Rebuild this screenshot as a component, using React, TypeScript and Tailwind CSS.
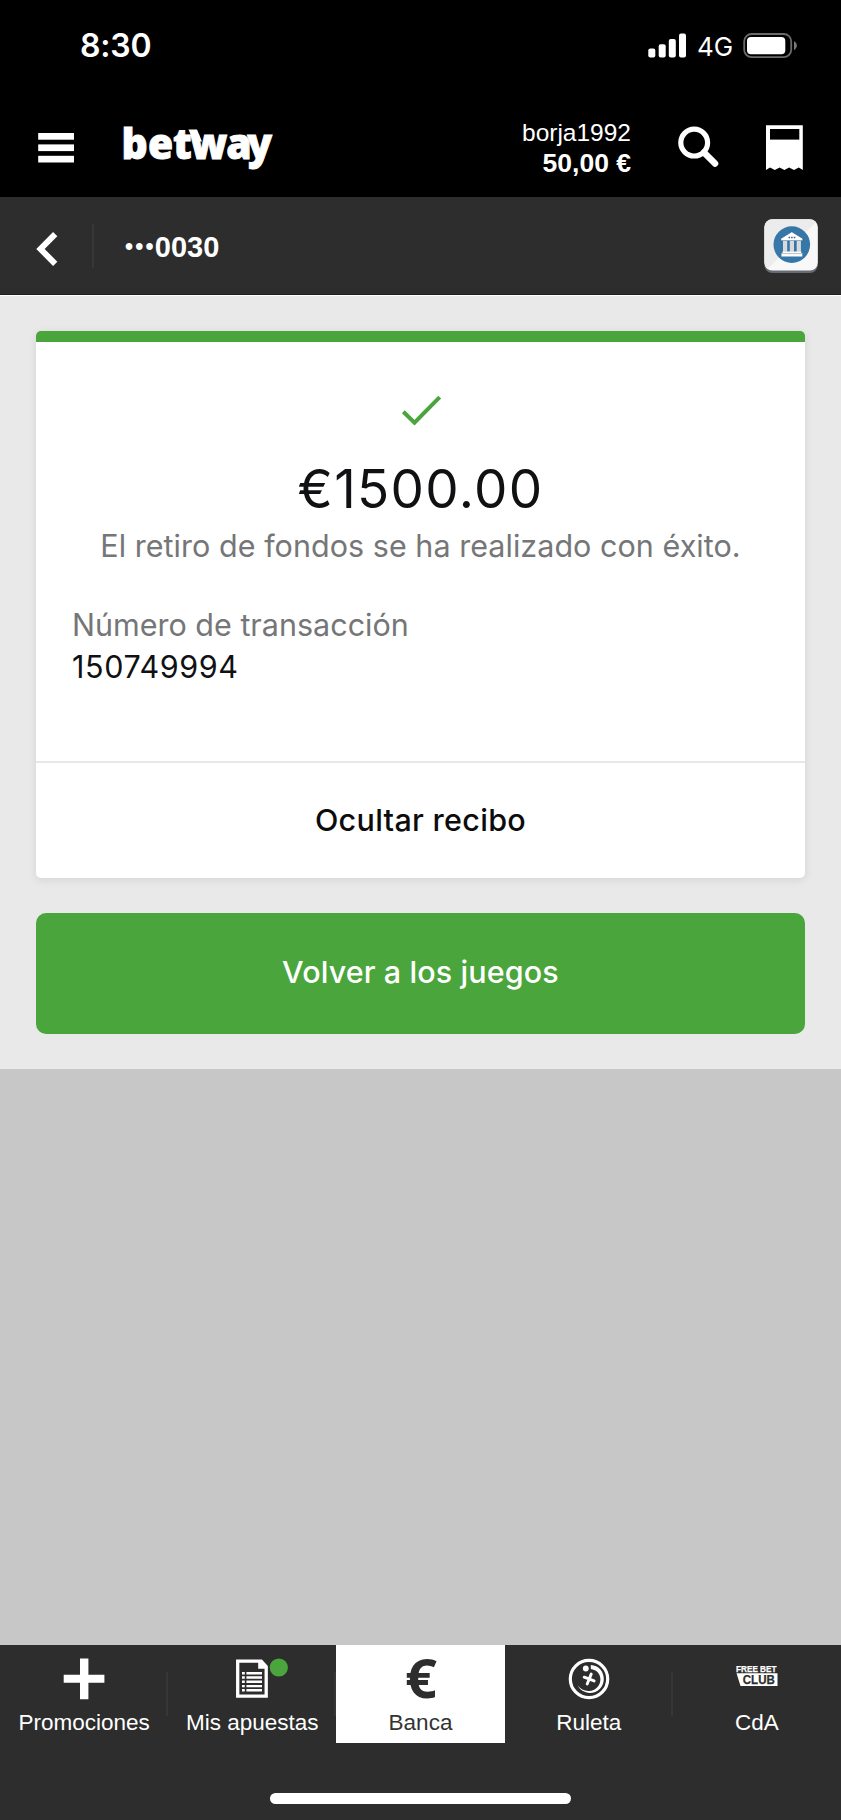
import type { ReactNode } from "react";

const inter = "font-['Inter','Liberation_Sans',sans-serif]";
const helv = "font-['Liberation_Sans',Arial,sans-serif]";

function StatusBar() {
  return (
    <div className={`flex h-[92px] items-center pl-[80px] pr-[44px] text-white ${inter}`}>
      <span className="text-[32px] font-semibold leading-[40px] tracking-[-0.2px]">8:30</span>
      <svg className="ml-auto" width="39" height="92" viewBox="648 0 39 92" fill="#fff">
        <rect x="648.3" y="48.6" width="7" height="9" rx="2" />
        <rect x="658.7" y="44.3" width="7" height="13.3" rx="2" />
        <rect x="668.8" y="39" width="7" height="18.6" rx="2" />
        <rect x="679" y="33.6" width="7" height="24" rx="2" />
      </svg>
      <span className="ml-[10px] mt-[2px] w-[37px] text-[26px] leading-[40px]">4G</span>
      <svg className="ml-[8px]" width="55" height="92" viewBox="742 0 55 92">
        <rect x="744.2" y="34" width="47" height="23.2" rx="7.5" fill="none" stroke="#6a6a6a" strokeWidth="1.8" />
        <rect x="747" y="37" width="38.3" height="17.2" rx="4" fill="#fff" />
        <path d="M794 41.2c1.8.9 2.8 2.4 2.8 4.3s-1 3.6-2.8 4.5z" fill="#7a7a7a" />
      </svg>
    </div>
  );
}

function Header() {
  return (
    <div className="flex h-[105px] items-center pl-[38px] pr-[37px] text-white">
      <svg width="36" height="105" viewBox="38 92 36 105" fill="#fff">
        <rect x="38.2" y="133" width="35.8" height="6.7" />
        <rect x="38.2" y="144.4" width="35.8" height="6.7" />
        <rect x="38.2" y="155.8" width="35.8" height="6.7" />
      </svg>
      <svg className="ml-[46px] overflow-visible" width="160" height="105" viewBox="120 92 160 105" fill="#fff">
        <text
          x="126.5 154.2 180.3 198.3 235.6 257.6"
          y="159.300"
          transform="scale(0.96 1)"
          fontFamily="'Open Sans','Noto Sans',sans-serif"
          fontWeight="800"
          fontSize="42.5"
          stroke="#fff"
          strokeWidth="0.900"
        >
          betway
        </text>
        <path d="M188.500 129.600h8.500l5 12h-8.500z" />
      </svg>
      <div className={`ml-auto mt-[6px] flex flex-col items-end leading-[30px] ${helv}`}>
        <span className="text-[24.5px]">borja1992</span>
        <span className="text-[26.5px] font-bold">50,00 €</span>
      </div>
      <svg className="ml-[45px]" width="44" height="105" viewBox="676 92 44 105" fill="none" stroke="#fff">
        <circle cx="694.2" cy="142.6" r="13.4" strokeWidth="5.2" />
        <path d="M704 152.5l11 11" strokeWidth="6.6" strokeLinecap="round" />
      </svg>
      <svg className="ml-[45px]" width="39" height="105" viewBox="765 92 39 105">
        <path
          d="M766 125.2h36.8v44.9l-4-2.7-4.8 2.7-4.9-2.7-4.7 2.7-4.8-2.7-4.8 2.7-4.8-2.7-4 2.7z"
          fill="#fff"
        />
        <rect x="770" y="129" width="29.3" height="10.6" fill="#000" />
      </svg>
    </div>
  );
}

function BankBadge() {
  return (
    <svg width="56" height="58" viewBox="763 218 56 58">
      <rect x="764.4" y="221" width="53.4" height="52" rx="8" fill="#666b74" />
      <rect x="764.4" y="219.2" width="53.4" height="51.4" rx="8" fill="#f8f8f8" />
      <path d="M772.4 219.2h37.4a8 8 0 0 1 6.2 3l-48.5 46.500a8 8 0 0 1-3.100-6.100v-35.400a8 8 0 0 1 8-8z" fill="#ececec" />
      <circle cx="791.8" cy="244.6" r="18.3" fill="#3677a8" />
      <path d="M791.800 231.800l11 6.700v2.300h-22v-2.300z" fill="#fff" stroke="#1f5580" strokeWidth="0.6" />
      <path d="M788.500 237.500h6.800" stroke="#4a5f8a" strokeWidth="1.500" strokeDasharray="1.600 1" />
      <g fill="#d9dadd">
        <rect x="783" y="240.800" width="4.200" height="11" />
        <rect x="789.800" y="240.800" width="4.200" height="11" />
        <rect x="796.700" y="240.800" width="4.200" height="11" />
      </g>
      <path d="M782.500 251.500h18.800v1.500h1v3.500h-20.800v-3.500h1z" fill="#fff" />
      <path d="M781 253.600h21.600" stroke="#9aa3ae" strokeWidth="0.700" />
    </svg>
  );
}

function SubHeader() {
  return (
    <div className="flex h-[98px] items-center border-b border-[#1f1f1f] bg-[#2d2d2d] pl-[34px] pr-[22px] text-white">
      <svg width="26" height="98" viewBox="34 197 26 98" fill="none" stroke="#fff" strokeWidth="6">
        <path d="M55.200 234.200l-14.700 14.800 14.700 14.800" />
      </svg>
      <div className="ml-[32px] h-[44px] w-[2px] bg-[#373737]" />
      <div className={`ml-[31px] mt-[2px] flex items-center font-bold leading-[40px] ${helv}`}>
        <span className="text-[23px] tracking-[2.2px]">•••</span>
        <span className="-ml-[1px] text-[29px]">0030</span>
      </div>
      <div className="ml-auto mt-[2px]">
        <BankBadge />
      </div>
    </div>
  );
}

function ReceiptCard() {
  return (
    <section className="flex h-[547px] flex-col overflow-hidden rounded-[5px] border-t-[11px] border-[#4aa53c] bg-white shadow-[0_2px_10px_rgba(0,0,0,0.09)]">
      <div className="flex h-[419px] flex-col items-center pt-[49px]">
        <svg width="44" height="40" viewBox="398 392 44 40" fill="none" stroke="#4aa53c" strokeWidth="4">
          <path d="M402.300 412.700l11.200 10.900 25.200-25.500" />
        </svg>
        <h1 className="mt-[26px] text-[53px] leading-[64px] tracking-[1.3px] text-[#101113]">€1500.00</h1>
        <p className="mt-[6px] text-[30.500px] leading-[38px] tracking-[0.04px] text-[#757677]">
          El retiro de fondos se ha realizado con éxito.
        </p>
        <div className="mt-[39px] flex flex-col self-stretch pl-[36px] leading-[42px]">
          <span className="text-[30.500px] text-[#757677]">Número de transacción</span>
          <span className="text-[30.500px] tracking-[0.6px] text-[#101113]">150749994</span>
        </div>
      </div>
      <button className="flex flex-1 items-center justify-center border-t-2 border-[#e8e8e8] pb-[2px] text-[30.500px] font-medium tracking-[0.3px] text-[#0c0c0d]">
        Ocultar recibo
      </button>
    </section>
  );
}

function NavItem({ label, active, divider, children }: { label: string; active?: boolean; divider?: boolean; children: ReactNode }) {
  return (
    <div
      className={`relative flex h-[98px] flex-1 flex-col items-center pt-[9px] ${active ? "bg-white text-[#333]" : "text-white"}`}
    >
      <div className="flex h-[50px] items-center justify-center">{children}</div>
      <span className="mt-[5px] whitespace-nowrap text-[22.500px] leading-[28px]">{label}</span>
      {divider && <div className="absolute right-0 top-[27px] h-[44px] w-[2px] bg-[#373737]" />}
    </div>
  );
}

function BottomNav() {
  return (
    <nav className={`flex h-[175px] flex-col items-center bg-[#2d2d2d] ${helv}`}>
      <div className="flex w-full">
        <NavItem label="Promociones" divider>
          <svg width="42" height="42" viewBox="0 0 42 42">
            <path d="M17 .500h8.400v16.300h16v8H25.400v16.500H17V24.800H.700v-8H17z" fill="#fff" />
          </svg>
        </NavItem>
        <NavItem label="Mis apuestas" divider>
          <svg width="104" height="42" viewBox="200 1658 104 42">
            <path d="M237.700 1661.200h23.500l5 5.500v29.400h-28.500z" fill="none" stroke="#fff" strokeWidth="3.300" />
            <path d="M258.200 1660v8.700h9z" fill="#fff" />
            <path d="M242 1673.200h20M242 1677.500h20M242 1681.800h20M242 1686.100h20M242 1690.300h20" stroke="#fff" strokeWidth="2.400" strokeDasharray="2.800 1.600 30 0" />
            <circle cx="278.800" cy="1667.500" r="9.100" fill="#4aa53c" />
          </svg>
        </NavItem>
        <NavItem label="Banca" active>
          <svg className="overflow-visible" width="44" height="50" viewBox="399 1654 44 50">
            <text
              x="405"
              y="1698.300"
              fontFamily="'Open Sans','Noto Sans',sans-serif"
              fontWeight="700"
              fontSize="54"
              textLength="32"
              lengthAdjust="spacingAndGlyphs"
              fill="#2d2d2d"
            >
              €
            </text>
          </svg>
        </NavItem>
        <NavItem label="Ruleta" divider>
          <svg width="42" height="42" viewBox="567 1657.500 42 42">
            <circle cx="588" cy="1678.500" r="18.700" fill="none" stroke="#fff" strokeWidth="3.200" />
            <path
              d="M589.800 1664.500c7.800.400 13 6.500 13 13.900 0 8-6.200 14-14 14-5.400 0-10-3-12-7.300 2.600 3.500 6.500 5.600 11.200 5.400 6.800-.300 11.600-5.500 11.400-12-.200-5.500-3.800-9.200-9.600-10z"
              fill="#fff"
            />
            <circle cx="584.800" cy="1668" r="2.900" fill="#fff" />
            <path d="M583.200 1676.700l9.900 3.700M590.200 1673.600l-4 9.900" stroke="#fff" strokeWidth="2.900" strokeLinecap="round" />
          </svg>
        </NavItem>
        <NavItem label="CdA">
          <svg className="overflow-visible" width="44" height="42" viewBox="734.500 1659 44 42" fontFamily="'Liberation Sans',sans-serif" fontWeight="700">
            <text x="735.500" y="1672.500" fontSize="9.600" textLength="40.500" lengthAdjust="spacingAndGlyphs" fill="#fff" stroke="#fff" strokeWidth="0.250">
              FREE BET
            </text>
            <path d="M736 1674.300h41v12.800h-37z" fill="#fff" />
            <text x="742.300" y="1685.300" fontSize="12.800" textLength="32" lengthAdjust="spacingAndGlyphs" fill="#2d2d2d" stroke="#2d2d2d" strokeWidth="0.250">
              CLUB
            </text>
          </svg>
        </NavItem>
      </div>
      <div className="mt-[50px] h-[11px] w-[301px] rounded-full bg-white" />
    </nav>
  );
}

export default function App() {
  return (
    <div className="flex h-[1820px] w-[841px] flex-col bg-[#c7c7c7]">
      <header className="h-[197px] bg-black">
        <StatusBar />
        <Header />
      </header>
      <SubHeader />
      <main className={`h-[774px] border-t border-white bg-[#e9e9e9] px-[36px] pt-[35px] ${inter}`}>
        <ReceiptCard />
        <button className="mt-[35px] flex h-[121px] w-full items-center justify-center rounded-[10px] bg-[#4aa53c] pb-[4px] text-[30.500px] font-medium tracking-[0.1px] text-white">
          Volver a los juegos
        </button>
      </main>
      <div className="flex-1" />
      <BottomNav />
    </div>
  );
}
